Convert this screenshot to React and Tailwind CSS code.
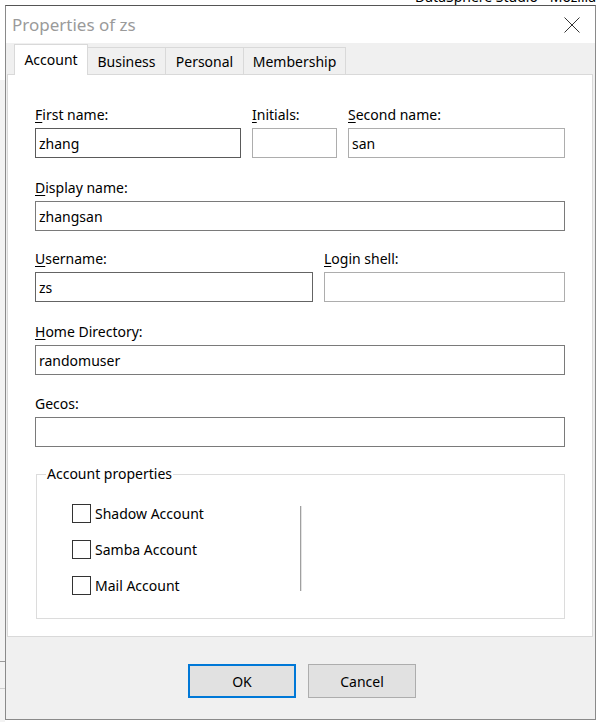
import React from "react";

function Field({ accel, rest, value = "", width, border = "border-[#7a7a7a]" }) {
  return (
    <div className="flex flex-col" style={width ? { width } : undefined}>
      <div className="h-[20px] leading-[20px] text-[14px] text-black whitespace-nowrap">
        {accel ? <u className="underline-offset-2">{accel}</u> : null}
        {rest}
      </div>
      <input
        type="text"
        readOnly
        value={value}
        className={`mt-[3px] h-[30px] w-full border ${border} bg-white px-[3px] text-[14px] text-black outline-none`}
      />
    </div>
  );
}

function Check({ label }) {
  return (
    <div className="flex h-[19px] items-center">
      <div className="h-[19px] w-[19px] border border-[#333333] bg-white" />
      <span className="ml-[4px] text-[14px] leading-[19px] text-black">{label}</span>
    </div>
  );
}

export default function App() {
  return (
    <div className="relative h-[722px] w-[596px] overflow-hidden bg-white font-['Noto_Sans',sans-serif]">
      {/* window underneath the dialog */}
      <span className="absolute left-[415px] top-[-12px] text-[14px] leading-[18px] text-black whitespace-nowrap">
        DataSphere Studio - Mozilla
      </span>
      <div className="absolute left-0 top-[80px] h-[642px] w-[5px] bg-[#f3f3f3]" />
      <div className="absolute left-0 top-[661px] h-px w-[5px] bg-[#9a9a9a]" />
      <div className="absolute left-0 top-[688px] h-px w-[5px] bg-[#cfcfcf]" />

      <div className="relative ml-[5px] mt-[5px] flex h-[715px] w-[591px] flex-col border border-[#8a8a8a] border-t-[#555555] bg-[#f0f0f0]">
        {/* title bar */}
        <div className="flex h-[37px] items-center justify-between bg-white pl-[6px] pr-[15px]">
          <span className="text-[17px] leading-[20px] text-[#9a9a9a]">Properties of zs</span>
          <svg width="16" height="16" viewBox="0 0 16 16">
            <path d="M0.5 0.5 L15.5 15.5 M15.5 0.5 L0.5 15.5" stroke="#333333" strokeWidth="1" fill="none" />
          </svg>
        </div>

        {/* tabs */}
        <div className="flex h-[31px] items-end pl-[8px]">
          <div className="relative z-10 -mb-px flex h-[31px] w-[74px] items-center justify-center border border-b-0 border-[#d9d9d9] bg-white pb-[2px] text-[14px] text-black">
            Account
          </div>
          <div className="flex h-[27px] w-[78px] items-center justify-center border-t border-r border-[#d9d9d9] bg-[#f0f0f0] text-[14px] text-black">
            Business
          </div>
          <div className="flex h-[27px] w-[78px] items-center justify-center border-t border-r border-[#d9d9d9] bg-[#f0f0f0] text-[14px] text-black">
            Personal
          </div>
          <div className="flex h-[27px] w-[102px] items-center justify-center border-t border-r border-[#d9d9d9] bg-[#f0f0f0] text-[14px] text-black">
            Membership
          </div>
        </div>

        {/* tab panel */}
        <div className="ml-px mr-[2px] flex h-[563px] flex-col border border-[#d9d9d9] bg-white px-[27px] pt-[30px]">
          <div className="flex gap-[11px]">
            <Field accel="F" rest="irst name:" value="zhang" width="206px" border="border-[#5a5a5a]" />
            <Field accel="I" rest="nitials:" width="85px" border="border-[#adadad]" />
            <Field accel="S" rest="econd name:" value="san" width="217px" border="border-[#adadad]" />
          </div>
          <div className="mt-[20px]">
            <Field accel="D" rest="isplay name:" value="zhangsan" />
          </div>
          <div className="mt-[18px] flex gap-[11px]">
            <Field accel="U" rest="sername:" value="zs" width="278px" border="border-[#646464]" />
            <Field accel="L" rest="ogin shell:" width="241px" border="border-[#adadad]" />
          </div>
          <div className="mt-[20px]">
            <Field accel="H" rest="ome Directory:" value="randomuser" />
          </div>
          <div className="mt-[19px]">
            <Field rest="Gecos:" />
          </div>

          <fieldset className="ml-px mt-[17px] h-[155px] w-[529px] border border-[#dcdcdc]">
            <legend className="ml-[9px] px-px text-[14px] leading-[20px] text-black">Account properties</legend>
            <div className="mt-[20px] flex pl-[35px]">
              <div className="flex w-[228px] flex-col gap-[17px]">
                <Check label="Shadow Account" />
                <Check label="Samba Account" />
                <Check label="Mail Account" />
              </div>
              <div className="mt-[2px] flex h-[85px]">
                <div className="w-px bg-[#a0a0a0]" />
                <div className="w-px bg-[#e3e3e3]" />
              </div>
            </div>
          </fieldset>
        </div>

        {/* buttons */}
        <div className="flex gap-[12px] pl-[182px] pt-[27px]">
          <button className="h-[34px] w-[108px] border-2 border-[#0078d7] bg-[#e1e1e1] text-[14px] text-black">
            OK
          </button>
          <button className="h-[34px] w-[108px] border border-[#adadad] bg-[#e1e1e1] text-[14px] text-black">
            Cancel
          </button>
        </div>
      </div>
    </div>
  );
}
